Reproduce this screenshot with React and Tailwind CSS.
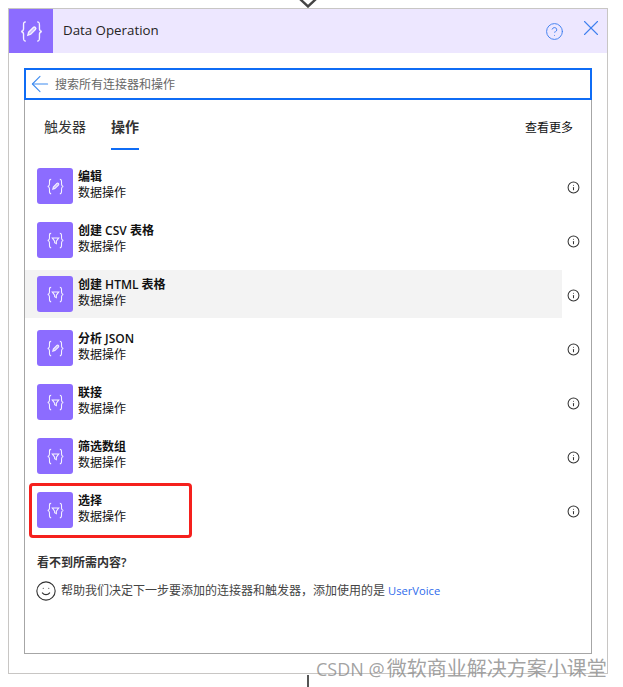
import { X, ArrowLeft, Info, CircleHelp, Smile } from 'lucide-react';

const FONT = "font-['Open_Sans','Noto_Sans_CJK_SC',sans-serif]";

const items = [
  { title: '编辑', icon: 'edit' },
  { title: '创建 CSV 表格', icon: 'filter' },
  { title: '创建 HTML 表格', icon: 'filter', hover: true },
  { title: '分析 JSON', icon: 'edit' },
  { title: '联接', icon: 'filter' },
  { title: '筛选数组', icon: 'filter' },
  { title: '选择', icon: 'filter', marked: true },
];

const DataIcon = ({ icon, size = 36, glyph = 19, rounded = true }) => (
  <div
    className={`shrink-0 bg-[#8c6cff] flex items-center justify-center ${rounded ? 'rounded-[3px]' : ''}`}
    style={{ width: size, height: size }}
  >
    <svg width={glyph} height={glyph} viewBox="0 0 22 22" fill="none" stroke="#f6f3ff" strokeWidth="1.2">
      <path d="M6 2.5C4 2.5 4 3.5 4 5.5V8.5C4 10 3.5 10.7 2 11C3.5 11.3 4 12 4 13.5V16.5C4 18.5 4 19.5 6 19.5" />
      <path d="M16 2.5C18 2.5 18 3.5 18 5.5V8.5C18 10 18.5 10.7 20 11C18.5 11.3 18 12 18 13.5V16.5C18 18.5 18 19.5 16 19.5" />
      {icon === 'edit' ? (
        <path d="M7.8 14.2L8.5 11.6L12.6 7.5C13.1 7 13.9 7 14.4 7.5C14.9 8 14.9 8.8 14.4 9.3L10.3 13.4Z" fill="#f1edff" fillOpacity="0.6" />
      ) : (
        <path d="M7.2 8H14.8L12 11.8V14.6L10 13.6V11.8Z" />
      )}
    </svg>
  </div>
);

const Row = ({ title, icon, hover, marked }) => (
  <div className="relative h-[54px] flex items-center">
    <div className={`w-[537px] h-[48px] flex items-center pl-[12px] ${hover ? 'bg-[#f3f3f3]' : ''}`}>
      <DataIcon icon={icon} />
      <div className="ml-[5px] text-[12px] leading-[16px] text-[#111] -mt-[2px]">
        <div className="font-semibold">{title}</div>
        <div>数据操作</div>
      </div>
    </div>
    <Info className="ml-[5px] mt-[2px] text-[#333]" size={13} strokeWidth={1.9} />
    {marked && (
      <div className="absolute left-[4px] top-0 w-[163px] h-[55px] border-[3px] border-[#f5201d] rounded-[4px]" />
    )}
  </div>
);

export default function App() {
  return (
    <div className={`relative w-[623px] h-[687px] bg-white overflow-hidden pt-[8px] pl-[8px] ${FONT}`}>
      <svg className="absolute left-[299px] top-0" width="18" height="8" viewBox="0 0 18 8" fill="none" stroke="#444" strokeWidth="2.4">
        <path d="M1 -1L9 6.5L17 -1" />
      </svg>

      <div className="w-[600px] h-[666px] border border-[#c8c6c4] flex flex-col">
        <div className="h-[44px] shrink-0 bg-[#ede7ff] flex items-center">
          <DataIcon icon="edit" size={44} glyph={25} rounded={false} />
          <div className="ml-[10px] text-[13.3px] text-[#252423] flex-1">Data Operation</div>
          <CircleHelp className="text-[#3f7fef] mr-[14px]" size={19} strokeWidth={1.2} />
          <X className="text-[#3f7fef] mr-[3px] -mt-[6px]" size={26} strokeWidth={1} />
        </div>

        <div className="ml-[15px] mt-[15px] w-[568px] h-[586px] flex flex-col">
          <div className="h-[32px] shrink-0 border-2 border-[#0f6cf5] flex items-center pl-px">
            <ArrowLeft className="text-[#3f8cf0]" size={26} strokeWidth={1} />
            <span className="ml-[2px] pt-[2px] text-[12px] text-[#666]">搜索所有连接器和操作</span>
          </div>

          <div className="flex-1 border border-t-0 border-[#a6a6a6] flex flex-col">
            <div className="h-[50px] shrink-0 flex justify-between text-[12px] pl-[19px] pr-[18px]">
              <div className="flex gap-[25px] text-[14px] leading-[20px] text-[#333]">
                <div className="pt-[17px]">触发器</div>
                <div className="pt-[17px] h-[50px] w-[28px] font-semibold border-b-2 border-[#0f6cf5] whitespace-nowrap">操作</div>
              </div>
              <div className="pt-[19px] text-[#111]">查看更多</div>
            </div>

            <div className="mt-[9px]">
              {items.map((item) => (
                <Row key={item.title} {...item} />
              ))}
            </div>

            <div className="ml-[12px] mt-[17px] text-[12px] font-semibold text-[#333]">看不到所需内容?</div>
            <div className="ml-[10px] mt-[8px] flex items-center text-[12px] text-[#444]">
              <Smile className="text-[#333]" size={22} strokeWidth={1.2} />
              <span className="ml-[4px]">帮助我们决定下一步要添加的连接器和触发器，添加使用的是</span>
              <span className="ml-[3px] text-[11.2px] text-[#2e6bec]">UserVoice</span>
            </div>
          </div>
        </div>
      </div>

      <div className="absolute left-[307px] top-[675px] w-[2px] h-[12px] bg-[#555]" />
      <div className="absolute left-[316px] top-[657px] text-[18px] leading-[24px] text-[#8a8a8a]/80 whitespace-nowrap">
        CSDN @<span className="ml-[2px] text-[20px]">微软商业解决方案小课堂</span>
      </div>
    </div>
  );
}
